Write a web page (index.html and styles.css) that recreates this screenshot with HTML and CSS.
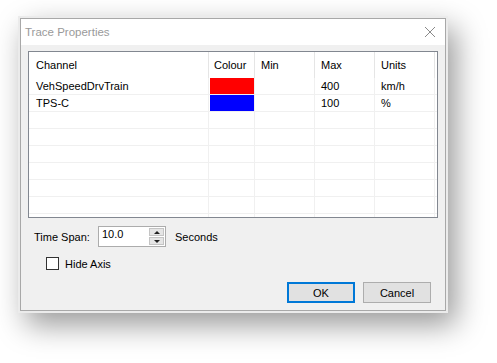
FILE: index.html
```html
<!DOCTYPE html>
<html>
    <head>
        <title>Trace Properties</title>
        <meta charset="utf-8">
        <link rel="stylesheet" href="styles.css">
    </head>
    <body>
        <div class="page">
            <div class="dialog">
                <div class="titlebar">
                    <span class="title">Trace Properties</span>
                    <svg class="close" width="12" height="12" viewBox="0 0 12 12">
                        <path d="M1 1 L11 11 M11 1 L1 11" stroke="#8a8a8a" stroke-width="1" fill="none"/>
                    </svg>
                </div>
                <div class="content">
                    <div class="listview">
                        <div class="row header">
                            <div class="cell channel">Channel</div>
                            <div class="cell colour">Colour</div>
                            <div class="cell num">Min</div>
                            <div class="cell num">Max</div>
                            <div class="cell num">Units</div>
                        </div>
                        <div class="row">
                            <div class="cell channel">VehSpeedDrvTrain</div>
                            <div class="cell colour"><span class="swatch red"></span></div>
                            <div class="cell num"></div>
                            <div class="cell num">400</div>
                            <div class="cell num">km/h</div>
                        </div>
                        <div class="row">
                            <div class="cell channel">TPS-C</div>
                            <div class="cell colour"><span class="swatch blue"></span></div>
                            <div class="cell num"></div>
                            <div class="cell num">100</div>
                            <div class="cell num">%</div>
                        </div>
                        <div class="row"><div class="cell channel"></div><div class="cell colour"></div><div class="cell num"></div><div class="cell num"></div><div class="cell num"></div></div>
                        <div class="row"><div class="cell channel"></div><div class="cell colour"></div><div class="cell num"></div><div class="cell num"></div><div class="cell num"></div></div>
                        <div class="row"><div class="cell channel"></div><div class="cell colour"></div><div class="cell num"></div><div class="cell num"></div><div class="cell num"></div></div>
                        <div class="row"><div class="cell channel"></div><div class="cell colour"></div><div class="cell num"></div><div class="cell num"></div><div class="cell num"></div></div>
                        <div class="row"><div class="cell channel"></div><div class="cell colour"></div><div class="cell num"></div><div class="cell num"></div><div class="cell num"></div></div>
                        <div class="row"><div class="cell channel"></div><div class="cell colour"></div><div class="cell num"></div><div class="cell num"></div><div class="cell num"></div></div>
                        <div class="row"><div class="cell channel"></div><div class="cell colour"></div><div class="cell num"></div><div class="cell num"></div><div class="cell num"></div></div>
                    </div>

                    <div class="timespan">
                        <span class="label">Time Span:</span>
                        <div class="spinbox">
                            <span class="spin-value">10.0</span>
                            <div class="spin-buttons">
                                <div class="spin-btn"><span class="arrow up"></span></div>
                                <div class="spin-btn"><span class="arrow down"></span></div>
                            </div>
                        </div>
                        <span class="unit">Seconds</span>
                    </div>

                    <div class="check-row">
                        <span class="checkbox"></span>
                        <span>Hide Axis</span>
                    </div>

                    <div class="buttons">
                        <button class="btn default">OK</button>
                        <button class="btn">Cancel</button>
                    </div>
                </div>
            </div>
        </div>
    </body>
</html>
```

FILE: styles.css
```css
html, body {
    height: 100%;
}

body {
    margin: 0;
    background: #ffffff;
    font-family: "Liberation Sans", Arial, sans-serif;
    font-size: 11px;
    color: #000000;
}

.page {
    min-height: 363px;
    padding-top: 18px;
    padding-left: 20px;
    box-sizing: border-box;
}

.dialog {
    width: 424px;
    height: 291px;
    border: 1px solid #a8a8a8;
    background: #f0f0f0;
    box-shadow: 0 0 0 2px #ebebeb, 8px 12px 28px 2px rgba(0, 0, 0, 0.4);
}

.titlebar {
    height: 26px;
    background: #ffffff;
    display: flex;
    align-items: center;
    justify-content: space-between;
    padding-left: 4px;
    padding-right: 9px;
}

.title {
    color: #9a9a9a;
    font-size: 11.5px;
}

.content {
    padding: 6px 7px 0 7px;
}

.listview {
    height: 165px;
    border: 1px solid #828790;
    background: #ffffff;
    overflow: hidden;
}

.row {
    display: flex;
    height: 16px;
    border-bottom: 1px solid #f0f0f0;
}

.row.header {
    height: 26px;
    border-bottom: none;
}

.cell {
    box-sizing: border-box;
    border-right: 1px solid #f0f0f0;
    padding-left: 6px;
    line-height: 16px;
    white-space: nowrap;
}

.header .cell {
    line-height: 26px;
    border-right-color: #e5e5e5;
}

.channel {
    width: 180px;
    padding-left: 7px;
}

.colour {
    width: 46px;
    padding-left: 5px;
}

.num {
    width: 60px;
}

.row:not(.header) .colour {
    padding-left: 1px;
}

.swatch {
    display: block;
    width: 44px;
    height: 16px;
}

.red {
    background: #ff0000;
}

.blue {
    background: #0000ff;
}

.timespan {
    display: flex;
    align-items: center;
    margin-top: 8px;
    padding-left: 6px;
    height: 21px;
}

.label {
    width: 64px;
}

.spinbox {
    display: flex;
    width: 66px;
    height: 19px;
    border: 1px solid #acacac;
    background: #ffffff;
}

.spin-value {
    flex: 1;
    padding-left: 3px;
    line-height: 15px;
}

.spin-buttons {
    width: 15px;
    display: flex;
    flex-direction: column;
    gap: 1px;
    padding: 1px 1px 1px 0;
}

.spin-btn {
    flex: 1;
    background: #e5e5e5;
    border: 1px solid #c4c4c4;
    display: flex;
    align-items: center;
    justify-content: center;
}

.arrow {
    width: 0;
    height: 0;
    border-left: 3px solid transparent;
    border-right: 3px solid transparent;
}

.arrow.up {
    border-bottom: 3px solid #202020;
}

.arrow.down {
    border-top: 3px solid #202020;
}

.unit {
    margin-left: 9px;
}

.check-row {
    display: flex;
    align-items: center;
    gap: 6px;
    margin-top: 10px;
    padding-left: 18px;
    height: 13px;
}

.checkbox {
    width: 11px;
    height: 11px;
    border: 1px solid #333333;
    background: #ffffff;
}

.buttons {
    display: flex;
    justify-content: flex-end;
    gap: 8px;
    margin-top: 12px;
    padding-right: 7px;
}

.btn {
    width: 68px;
    height: 21px;
    background: #e1e1e1;
    border: 1px solid #adadad;
    font-family: "Liberation Sans", Arial, sans-serif;
    font-size: 11px;
    color: #000000;
    padding: 0;
}

.btn.default {
    border: 2px solid #0078d7;
}
```
